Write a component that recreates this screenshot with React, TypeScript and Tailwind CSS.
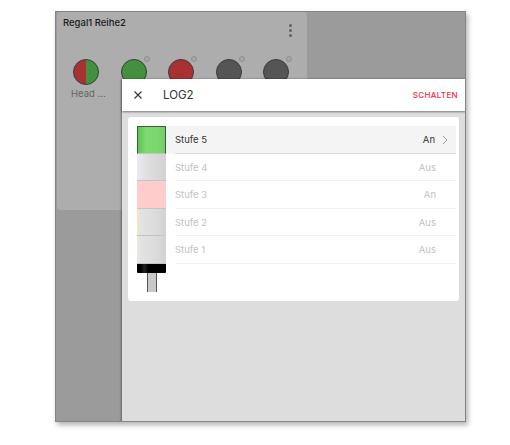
import React from "react";

const font = { fontFamily: "Inter, 'Open Sans', sans-serif" };

const lamps = [
  { cls: "bg-[linear-gradient(90deg,#a83232_50%,#43913f_50%)]", badge: false },
  { cls: "bg-[#43913f]", badge: true },
  { cls: "bg-[#a83232]", badge: true },
  { cls: "bg-[#555555]", badge: true },
  { cls: "bg-[#555555]", badge: true },
];

const rows = [
  { name: "Stufe 5", val: "An", active: true },
  { name: "Stufe 4", val: "Aus", active: false },
  { name: "Stufe 3", val: "An", active: false },
  { name: "Stufe 2", val: "Aus", active: false },
  { name: "Stufe 1", val: "Aus", active: false },
];

const segs = [
  "bg-[linear-gradient(90deg,#5fc455,#7fd971_30%,#7ad86c_70%,#72cf66)] border-t border-x border-[#3d5a3a]",
  "bg-[linear-gradient(90deg,#eaeaf0,#dcdcdc_50%,#d2d2d2)]",
  "bg-[#ffcccc]",
  "bg-[linear-gradient(90deg,#f7e6c0,#e2e2e2_15%,#dcdcdc_60%,#d2d2d2)]",
  "bg-[linear-gradient(90deg,#dfeee0,#e2e2e2_15%,#dcdcdc_60%,#d2d2d2)]",
];

export default function App() {
  return (
    <div className="w-[510px] h-[445px] bg-white pt-[11px] pl-[55px]" style={font}>
      <div className="relative w-[411px] h-[411px] bg-[#9b9b9b] border border-[#858585] shadow-[2px_3px_5px_rgba(0,0,0,0.3)] overflow-hidden">
        <div className="ml-[1px] w-[250px] h-[198px] bg-[#adadad] rounded-[3px] px-[6px] pt-[5px]">
          <div className="flex justify-between">
            <span className="text-[9.5px] leading-[12px] font-medium text-[#1c1c1c]">Regal1 Reihe2</span>
            <div className="flex flex-col gap-[2px] mt-[7px] mr-[9px]">
              <span className="w-[3px] h-[3px] rounded-full bg-[#606060]" />
              <span className="w-[3px] h-[3px] rounded-full bg-[#606060]" />
              <span className="w-[3px] h-[3px] rounded-full bg-[#606060]" />
            </div>
          </div>
          <div className="flex mt-[22px] ml-[10px] gap-[21.6px]">
            {lamps.map((l, i) => (
              <div key={i} className="relative w-[26px]">
                <div className={`w-[26px] h-[26px] rounded-full border-[1.5px] border-[#3a3a3a] ${l.cls}`} />
                {l.badge && (
                  <span className="absolute -top-[3px] -right-[3px] w-[6px] h-[6px] rounded-full border border-[#8f8f8f] bg-[#a6a6a6]" />
                )}
              </div>
            ))}
          </div>
          <div className="text-[9.5px] leading-[12px] text-[#666666] mt-[3px] ml-[8px]">Head ...</div>
        </div>

        <div className="absolute left-[66px] top-[67px] w-[344px] h-[344px] bg-[#dddddd] shadow-[-1px_0_2px_rgba(0,0,0,0.35)]">
          <div className="h-[32px] bg-white flex items-center pl-[11px] pr-[8px] shadow-[0_1px_2px_rgba(0,0,0,0.45)]">
            <svg width="10" height="10" viewBox="0 0 10 10" className="text-[#333333]">
              <path d="M1.5 1.5l7 7M8.5 1.5l-7 7" stroke="currentColor" strokeWidth="1.1" fill="none" />
            </svg>
            <span className="ml-[20px] pt-[2px] text-[11.5px] text-[#333333]">LOG2</span>
            <span className="ml-auto text-[8px] font-medium tracking-[0.35px] text-[#ee2b47]">SCHALTEN</span>
          </div>

          <div className="relative mt-[6px] ml-[6px] w-[331px] h-[184px] bg-white rounded-[3px] pt-[9px] pl-[9px] pr-[3px]">
            {rows.map((r) => (
              <div
                key={r.name}
                className={`h-[27.5px] pl-[38px] ${r.active ? "bg-[#f4f4f4]" : ""}`}
              >
                <div
                  className={`h-full flex items-center pt-[2px] border-b ${r.active ? "border-[#dddddd]" : "border-[#f1f1f1]"} text-[9.5px] ${r.active ? "text-[#333333]" : "text-[#c2c2c2]"}`}
                >
                  <span>{r.name}</span>
                  <span className={`ml-auto ${r.active ? "mr-[7px]" : "mr-[20px]"}`}>{r.val}</span>
                  {r.active && (
                    <svg width="6" height="10" viewBox="0 0 6 10" className="mr-[8px]">
                      <path d="M1 1l4 4-4 4" stroke="#9a9a9a" strokeWidth="1" fill="none" />
                    </svg>
                  )}
                </div>
              </div>
            ))}

            <div className="absolute left-[9px] top-[9px] w-[29px] flex flex-col items-center">
              {segs.map((s, i) => (
                <div key={i} className={`w-[29px] h-[27.5px] border-b border-b-[#c4c4c4] ${s}`} />
              ))}
              <div className="w-[29px] h-[9px] bg-[linear-gradient(90deg,#000000,#000000_15%,#222222_25%,#000000_40%)] rounded-b-[1px]" />
              <div className="w-[10px] h-[19px] bg-[#c8c8c8] border-x border-[#555555]" />
            </div>
          </div>
        </div>
      </div>
    </div>
  );
}
